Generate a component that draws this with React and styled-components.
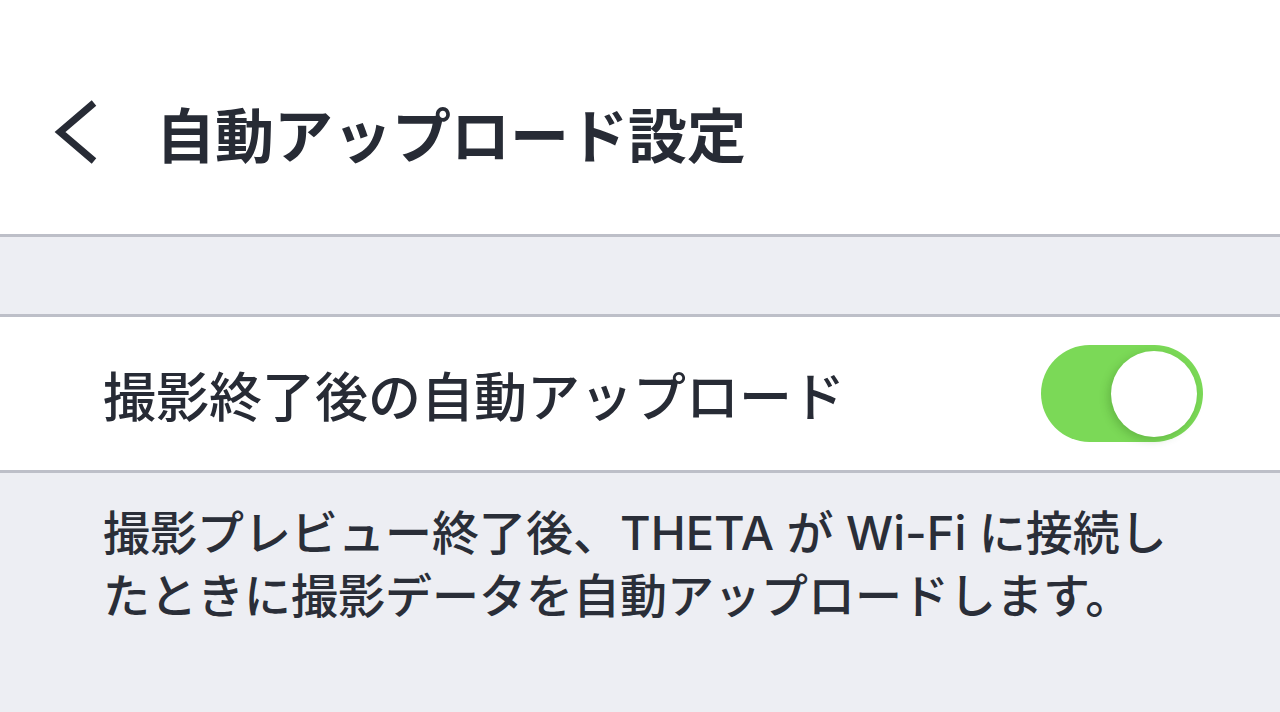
import React from 'react'
import styled, {createGlobalStyle} from 'styled-components'

const GlobalStyle = createGlobalStyle`
  html, body {
    margin: 0;
    padding: 0;
    background: #edeef3;
    font-family: "Noto Sans CJK JP", "Noto Sans", sans-serif;
    color: #272b35;
  }
`

const Page = styled.div`
  width: 1280px;
  height: 712px;
  overflow: hidden;
  background: #edeef3;
`

const Header = styled.header`
  height: 237px;
  background: #ffffff;
  display: flex;
  align-items: center;
  padding: 30px 0 0 52px;
  box-sizing: border-box;
  border-bottom: 3px solid #bdbfc8;
`

const BackButton = styled.button`
  border: none;
  background: none;
  padding: 0;
  width: 52px;
  height: 66px;
  display: flex;
  align-items: center;
  cursor: pointer;
`

const Title = styled.h1`
  margin: 0 0 0 52px;
  font-size: 59px;
  font-weight: 700;
  color: #272b35;
`

const Spacer = styled.div`
  height: 77px;
  border-bottom: 3px solid #bdbfc8;
`

const Row = styled.div`
  height: 153px;
  background: #ffffff;
  display: flex;
  align-items: center;
  justify-content: space-between;
  padding: 0 77px 0 103px;
  border-bottom: 3px solid #bdbfc8;
`

const RowLabel = styled.span`
  font-size: 53px;
  font-weight: 500;
  color: #272b35;
`

const Switch = styled.div`
  width: 162px;
  height: 97px;
  border-radius: 49px;
  background: ${p => (p.on ? '#7bd957' : '#e5e5ea')};
  display: flex;
  align-items: center;
  justify-content: ${p => (p.on ? 'flex-end' : 'flex-start')};
  padding: 0 6px;
  box-sizing: border-box;
`

const Knob = styled.div`
  width: 86px;
  height: 86px;
  border-radius: 50%;
  background: #ffffff;
  box-shadow: -3px 3px 8px rgba(40, 90, 20, 0.25);
`

const Note = styled.p`
  margin: 0;
  padding: 28px 0 0 103px;
  font-family: Inter, "Noto Sans CJK JP", sans-serif;
  font-size: 47px;
  line-height: 63px;
  font-weight: 500;
  color: #2a2e38;
`

export default function App() {
  return (
    <Page>
      <GlobalStyle />
      <Header>
        <BackButton aria-label="戻る">
          <svg width="48" height="66" viewBox="0 0 48 66">
            <path d="M42 4 L8 33 L42 62" fill="none" stroke="#272b35" strokeWidth="7" />
          </svg>
        </BackButton>
        <Title>自動アップロード設定</Title>
      </Header>
      <Spacer />
      <Row>
        <RowLabel>撮影終了後の自動アップロード</RowLabel>
        <Switch on>
          <Knob />
        </Switch>
      </Row>
      <Note>
        撮影プレビュー終了後、THETA が Wi-Fi に接続し
        <br />
        たときに撮影データを自動アップロードします。
      </Note>
    </Page>
  )
}
